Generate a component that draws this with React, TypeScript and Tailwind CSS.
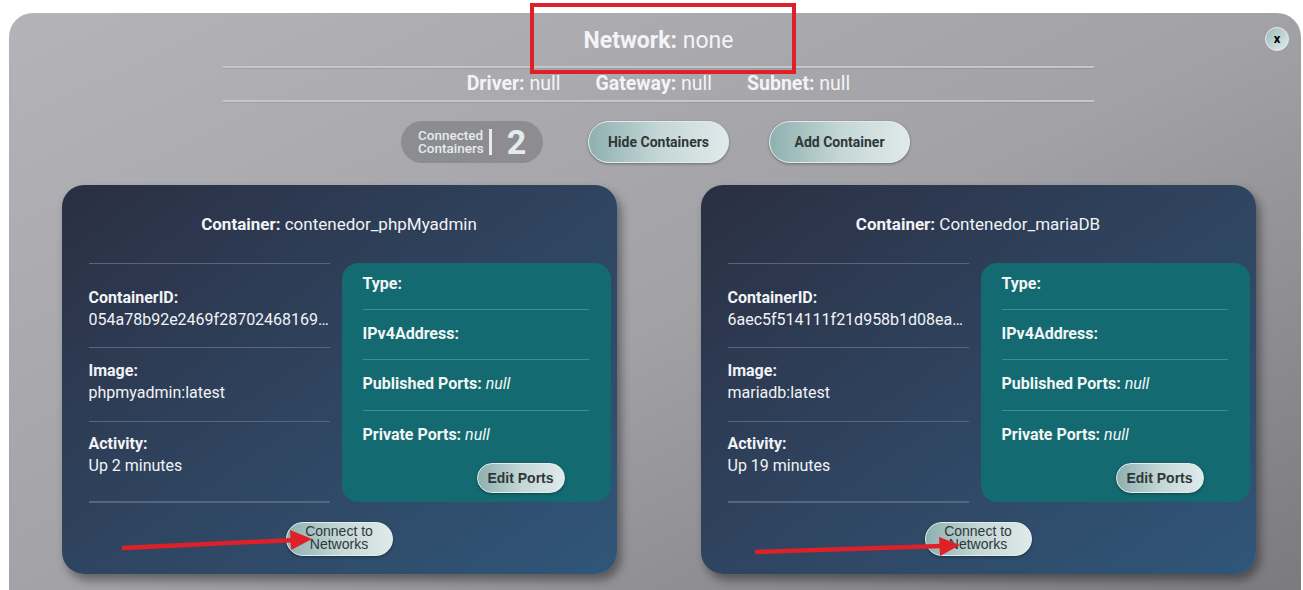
import React from "react";

const roboto = { fontFamily: "Roboto, 'Liberation Sans', sans-serif" };

function GlossButton({ children, className = "" }: { children: React.ReactNode; className?: string }) {
  return (
    <button
      className={
        "rounded-full border border-[#e3ecec] bg-gradient-to-r from-[#8fb0b0] via-[#c4d6d6] to-[#e0eaea] text-[#2f3838] shadow-[0_1px_3px_rgba(0,0,0,0.35)] " +
        className
      }
    >
      {children}
    </button>
  );
}

type C = { name: string; id: string; image: string; activity: string };

function Card({ c }: { c: C }) {
  return (
    <div className="w-[555px] h-[389px] rounded-[22px] bg-gradient-to-br from-[#2a2f42] via-[#2f4460] to-[#2f5679] shadow-[4px_6px_10px_rgba(0,0,0,0.4)] flex flex-col text-[#f1f3f5]">
      <div className="h-[78px] pt-[28px] text-center text-[17px] leading-[22px]">
        <span className="font-bold">Container:</span> {c.name}
      </div>
      <div className="flex pl-[27px] pr-[6px]">
        <div className="w-[241px] flex flex-col text-[16px] leading-[22px]">
          <div className="h-px bg-[#56667c]" />
          <div className="h-[83px] pt-[23px]">
            <div className="font-bold">ContainerID:</div>
            <div className="truncate">{c.id}</div>
          </div>
          <div className="h-px bg-[#56667c]" />
          <div className="h-[73px] pt-[12px]">
            <div className="font-bold">Image:</div>
            <div>{c.image}</div>
          </div>
          <div className="h-px bg-[#56667c]" />
          <div className="h-[79px] pt-[11px]">
            <div className="font-bold">Activity:</div>
            <div>{c.activity}</div>
          </div>
          <div className="h-[2px] bg-[#56667c]" />
        </div>
        <div className="ml-[12px] w-[269px] h-[239px] rounded-[16px] bg-[#136a70] pt-[10px] pl-[21px] pr-[22px] text-[16px] leading-[22px] text-[#f2f6f6]">
          <div className="font-bold h-[22px]">Type:</div>
          <div className="h-px bg-[#3f8d91] mt-[14px] mb-[13px]" />
          <div className="font-bold h-[22px]">IPv4Address:</div>
          <div className="h-px bg-[#3f8d91] mt-[14px] mb-[13px]" />
          <div className="h-[22px]">
            <span className="font-bold">Published Ports:</span> <i>null</i>
          </div>
          <div className="h-px bg-[#3f8d91] mt-[15px] mb-[13px]" />
          <div className="h-[22px]">
            <span className="font-bold">Private Ports:</span> <i>null</i>
          </div>
          <div className="flex mt-[17px] pl-[114px]">
            <GlossButton className="w-[88px] h-[30px] text-[14px] font-bold leading-none">
              <span style={{ fontFamily: "'Liberation Sans', Arial, sans-serif" }}>Edit Ports</span>
            </GlossButton>
          </div>
        </div>
      </div>
      <div className="flex justify-center mt-[19px]">
        <GlossButton className="w-[107px] h-[34px] text-[14px] leading-[13px] text-[#2a3030]">
          <span className="pb-[2px] block" style={{ fontFamily: "'Liberation Sans', Arial, sans-serif" }}>
            Connect to
            <br />
            Networks
          </span>
        </GlossButton>
      </div>
    </div>
  );
}

export default function App() {
  const cards: C[] = [
    {
      name: "contenedor_phpMyadmin",
      id: "054a78b92e2469f28702468169a1f3c5b2d7e90a",
      image: "phpmyadmin:latest",
      activity: "Up 2 minutes",
    },
    {
      name: "Contenedor_mariaDB",
      id: "6aec5f514111f21d958b1d08ea27c4f0b3a1d9e2",
      image: "mariadb:latest",
      activity: "Up 19 minutes",
    },
  ];
  return (
    <div className="relative w-[1303px] h-[590px] overflow-hidden bg-white" style={roboto}>
      <div className="absolute left-[9px] top-[13px] w-[1292px] h-[620px] rounded-[24px] bg-gradient-to-br from-[#b4b3b8] via-[#a2a1a6] to-[#78777c]" />
      <div className="relative pt-[13px] pl-[9px]">
        <div className="w-[1292px] flex flex-col items-center pl-[7px]">
          <div className="h-[53px] pt-[14px] text-[23px] leading-[28px] text-[#f3f4f6]">
            <span className="font-bold">Network:</span> none
          </div>
          <div className="w-[871px] h-[2px] bg-[#c6c5c9] shadow-[0_1px_0_rgba(0,0,0,0.08)]" />
          <div className="h-[32px] flex items-center gap-[35px] text-[19.5px] leading-[24px] text-[#f3f4f6]">
            <div>
              <span className="font-bold">Driver:</span> null
            </div>
            <div>
              <span className="font-bold">Gateway:</span> null
            </div>
            <div>
              <span className="font-bold">Subnet:</span> null
            </div>
          </div>
          <div className="w-[871px] h-[2px] bg-[#c6c5c9] shadow-[0_1px_0_rgba(0,0,0,0.08)]" />
          <div className="mt-[19px] pr-[6px] flex items-center gap-[45px]">
            <div className="w-[142px] h-[42px] rounded-full bg-[#8d8c91] flex items-center pl-[17px] text-[#e4ebee]">
              <div className="text-[13.5px] leading-[13px] font-medium">
                Connected
                <br />
                Containers
              </div>
              <div className="w-[3px] h-[26px] bg-[#e4ebee] ml-[5px]" />
              <div className="ml-[15px] text-[34px] font-bold leading-none">2</div>
            </div>
            <div className="flex gap-[40px]">
              <GlossButton className="w-[141px] h-[42px] text-[14px] font-bold">Hide Containers</GlossButton>
              <GlossButton className="w-[141px] h-[42px] text-[14px] font-bold">Add Container</GlossButton>
            </div>
          </div>
          <div className="mt-[22px] flex gap-[84px]">
            {cards.map((c) => (
              <Card key={c.name} c={c} />
            ))}
          </div>
        </div>
      </div>
      <button className="absolute left-[1265px] top-[27px] w-[24px] h-[24px] rounded-full border border-[#e6eeee] bg-gradient-to-br from-[#9cbaba] to-[#e2ecec] text-[13px] font-bold leading-none text-black flex items-center justify-center pb-[2px]">
        x
      </button>
      <svg className="absolute left-0 top-0 pointer-events-none" width="1303" height="590">
        <rect x="532" y="5" width="262" height="67" fill="none" stroke="#de2028" strokeWidth="4" />
        <line x1="122" y1="548" x2="295" y2="540" stroke="#de2028" strokeWidth="4.5" />
        <polygon points="290,530 312,539 291,550" fill="#de2028" />
        <line x1="755" y1="552" x2="942" y2="546" stroke="#de2028" strokeWidth="4.5" />
        <polygon points="939,537 960,545 940,556" fill="#de2028" />
      </svg>
    </div>
  );
}
